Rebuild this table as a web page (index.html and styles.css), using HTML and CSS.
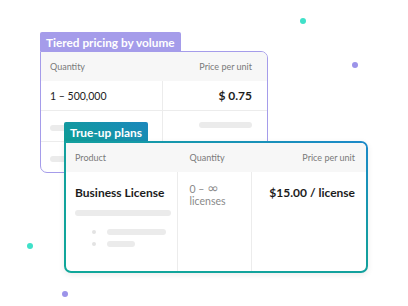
FILE: index.html
```html
<!DOCTYPE html>
<html>
<head>
<meta charset="utf-8">
<link rel="stylesheet" href="styles.css">
</head>
<body>
<div class="canvas">
  <span class="dot dot-teal dot-a"></span>
  <span class="dot dot-purple dot-b"></span>
  <span class="dot dot-teal dot-c"></span>
  <span class="dot dot-purple dot-d"></span>

  <div class="card card-volume">
    <div class="tag tag-purple">Tiered pricing by volume</div>
    <div class="box box-purple">
      <div class="vol-grid">
        <div class="cell head">Quantity</div>
        <div class="cell head right">Price per unit</div>
        <div class="cell body-cell">1 – 500,000</div>
        <div class="cell body-cell right price">$ 0.75</div>
        <div class="cell body-cell"><span class="bar bar-short"></span></div>
        <div class="cell body-cell right"><span class="bar bar-mid"></span></div>
        <div class="cell body-cell last"><span class="bar bar-short"></span></div>
        <div class="cell body-cell last right"></div>
      </div>
    </div>
  </div>

  <div class="card card-trueup">
    <div class="tag tag-teal">True-up plans</div>
    <div class="box box-teal">
      <div class="tu-grid">
        <div class="tcell thead">Product</div>
        <div class="tcell thead">Quantity</div>
        <div class="tcell thead right">Price per unit</div>
        <div class="tcell tbody">
          <div class="product">Business License</div>
          <span class="bar bar-wide"></span>
          <ul class="bullets">
            <li><span class="bar bar-b1"></span></li>
            <li><span class="bar bar-b2"></span></li>
          </ul>
        </div>
        <div class="tcell tbody qty">0 – <span class="inf">∞</span><br>licenses</div>
        <div class="tcell tbody right lic-price">$15.00 / license</div>
      </div>
    </div>
  </div>
</div>
</body>
</html>
```

FILE: styles.css
```css
* { box-sizing: border-box; }
html, body { margin: 0; padding: 0; background: #ffffff; }
body { font-family: Lato, "Open Sans", sans-serif; color: #1c1c1c; }

.canvas { position: relative; width: 408px; height: 306px; overflow: hidden; }

.dot { position: absolute; width: 6px; height: 6px; border-radius: 50%; }
.dot-teal { background: #3fe1c9; }
.dot-purple { background: #9c93e9; }
.dot-a { left: 300px; top: 18px; }
.dot-b { left: 352px; top: 62px; }
.dot-c { left: 27px; top: 243px; }
.dot-d { left: 62px; top: 291px; }

.card { position: absolute; display: flex; flex-direction: column; align-items: flex-start; }
.card-volume { left: 40px; top: 32px; width: 228px; }
.card-trueup { left: 64px; top: 122px; width: 304px; }

.tag {
  height: 19px;
  padding: 1px 6px 0 6px;
  font-size: 11.8px;
  font-weight: 700;
  line-height: 19px;
  color: #ffffff;
  border-radius: 2px 2px 0 0;
  white-space: nowrap;
  overflow: hidden;
}
.tag-purple { background: #a59cea; }
.tag-teal { background: linear-gradient(30deg, #0f9e96 0%, #1b87bd 100%); font-size: 11.9px; }

.box { width: 100%; overflow: hidden; background: #fff; }
.box-purple {
  height: 122px;
  border: 1.5px solid #a59cea;
  border-radius: 0 7px 7px 7px;
}
.box-teal {
  height: 132px;
  border: 2px solid transparent;
  border-radius: 0 7px 7px 7px;
  background:
    linear-gradient(#fff, #fff) padding-box,
    linear-gradient(20deg, #10a79a 0%, #139f9e 55%, #1c89c9 100%) border-box;
  box-shadow: 0 2px 6px rgba(0, 0, 0, 0.08);
}

.vol-grid {
  display: grid;
  grid-template-columns: 121.5px 1fr;
  grid-template-rows: 29px 30px 31px 1fr;
  height: 100%;
}
.cell {
  display: flex;
  align-items: center;
  padding: 0 15px 0 9px;
  font-size: 10.5px;
}
.cell.right { justify-content: flex-end; }
.head { background: #f7f7f7; color: #7a7a7a; font-size: 9px; }
.body-cell { border-bottom: 1px solid #ececec; }
.body-cell:nth-child(odd) { border-right: 1px solid #ececec; }
.body-cell.last { border-bottom: none; }
.price { font-size: 12px; font-weight: 700; }

.bar { display: block; height: 6px; border-radius: 3px; background: #ebebeb; }
.bar-short { width: 40px; margin-top: 3px; }
.bar-mid { width: 53px; margin-top: -3px; }
.bar-wide { width: 96px; margin-top: 10px; }
.bar-b1 { width: 59px; }
.bar-b2 { width: 28px; }

.tu-grid {
  display: grid;
  grid-template-columns: 111.6px 74px 1fr;
  grid-template-rows: 29px 1fr;
  height: 100%;
}
.tcell { padding: 0 11px 0 9px; }
.tcell.right { text-align: right; padding-right: 11px; }
.thead {
  background: #f7f7f7;
  color: #7a7a7a;
  font-size: 9px;
  line-height: 29px;
}
.thead:nth-child(2) { padding-left: 12px; }
.tbody { border-right: 1px solid #ececec; padding-top: 13px; }
.tbody:last-child { border-right: none; }
.product { font-size: 12px; font-weight: 700; line-height: 15px; }
.qty { color: #8a8a8a; font-size: 10.5px; line-height: 12.4px; padding-left: 12px; padding-top: 11px; }
.inf { font-family: "DejaVu Sans", sans-serif; font-size: 14px; line-height: 10px; }
.lic-price { font-size: 12px; font-weight: 700; line-height: 15px; }

.bullets { list-style: none; margin: 13px 0 0 0; padding: 0 0 0 17px; display: flex; flex-direction: column; gap: 6px; }
.bullets li { display: flex; align-items: center; gap: 11px; }
.bullets li::before { content: ""; width: 4px; height: 4px; border-radius: 50%; background: #e3e3e3; }
```
